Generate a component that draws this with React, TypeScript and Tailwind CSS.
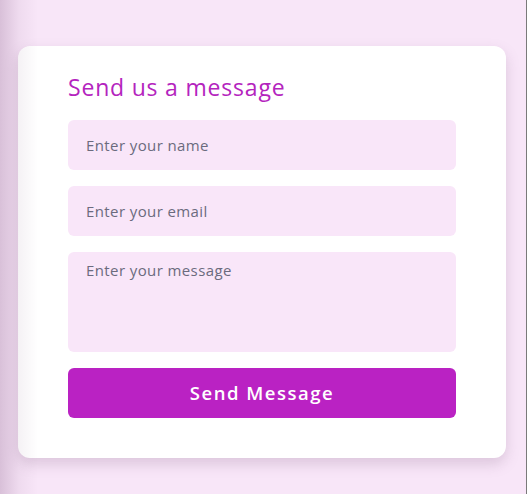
export default function App() {
  return (
    <div className="relative min-h-[494px] bg-[#f8e6f8] pt-[46px] pl-[18px] pr-[21px] pb-[36px] font-['Open_Sans',sans-serif]">
      <div className="rounded-xl bg-white px-[50px] pt-[26px] pb-[40px] shadow-[0_6px_14px_rgba(120,80,120,0.22)]">
        <h2 className="mb-[18px] text-[23px] leading-[30px] tracking-[0.8px] text-[#b424be]">Send us a message</h2>
        <form className="flex flex-col gap-4" onSubmit={(e) => e.preventDefault()}>
          <input
            type="text"
            placeholder="Enter your name"
            className="h-[50px] w-full rounded-md bg-[#f9e6f9] px-[18px] text-[15px] tracking-[0.4px] text-[#4b4b5e] outline-none placeholder:text-[#6b6b7e]"
          />
          <input
            type="email"
            placeholder="Enter your email"
            className="h-[50px] w-full rounded-md bg-[#f9e6f9] px-[18px] text-[15px] tracking-[0.4px] text-[#4b4b5e] outline-none placeholder:text-[#6b6b7e]"
          />
          <textarea
            placeholder="Enter your message"
            className="block h-[100px] w-full resize-none rounded-md bg-[#f9e6f9] px-[18px] pt-[7px] text-[15px] tracking-[0.4px] text-[#4b4b5e] outline-none placeholder:text-[#6b6b7e]"
          />
          <button
            type="submit"
            className="h-[50px] w-full rounded-md bg-[#ba22c3] text-[18.5px] font-semibold tracking-[1.5px] text-white"
          >
            Send Message
          </button>
        </form>
      </div>
      <div className="pointer-events-none absolute inset-y-0 left-0 w-[38px] bg-gradient-to-r from-[rgba(90,40,90,0.2)] via-[rgba(90,40,90,0.06)] to-transparent" />
      <div className="pointer-events-none absolute inset-y-0 right-0 w-px bg-[#7a7a7a]" />
    </div>
  );
}
